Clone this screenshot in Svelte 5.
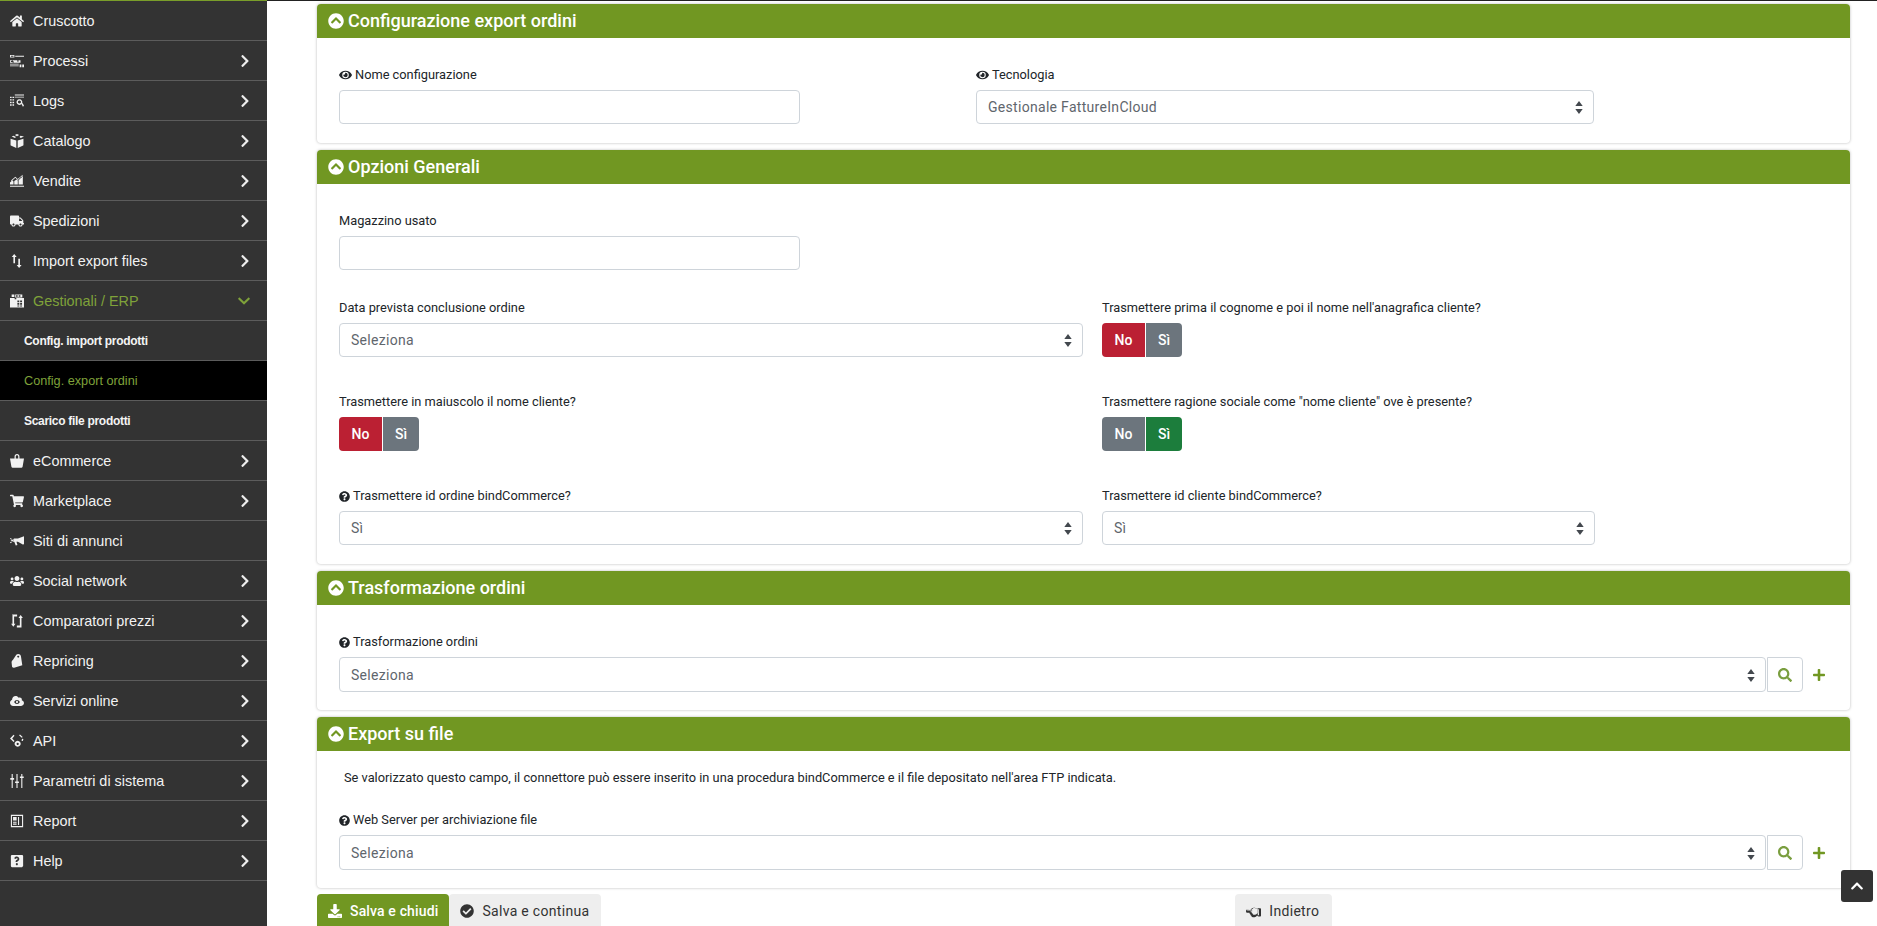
<script lang="ts">
  // font-awesome style glyphs, [viewBox width, path]
  const icons: Record<string, [number, string]> = {
    home: [576, 'M280.37 148.26L96 300.11V464a16 16 0 0 0 16 16l112.06-.29a16 16 0 0 0 15.92-16V368a16 16 0 0 1 16-16h64a16 16 0 0 1 16 16v95.64a16 16 0 0 0 16 16.05L464 480a16 16 0 0 0 16-16V300L295.67 148.26a12.19 12.19 0 0 0-15.3 0zM571.6 251.47L488 182.56V44.05a12 12 0 0 0-12-12h-56a12 12 0 0 0-12 12v72.61L318.47 43a48 48 0 0 0-61 0L4.34 251.47a12 12 0 0 0-1.6 16.9l25.5 31A12 12 0 0 0 45.15 301l235.22-193.74a12.19 12.19 0 0 1 15.3 0L530.9 301a12 12 0 0 0 16.9-1.6l25.5-31a12 12 0 0 0-1.7-16.93z'],
    processes: [512, 'M0 32h160v96H0zM32 64v32h96V64zM192 64h320v32H192zM0 224h64v32H32v32h96v-32h-32v-32h288v96H128v-32H96v32H0zM256 240v32h64v-32zM0 352h320v32H0zM352 384h64v96h-64zM448 384h64v96h-64zM0 416h320v32H0z'],
    logs: [512, 'M176 16h336v40H176zM176 96h336v30H176zM0 96h60v50H0zM90 96h60v50H90zM0 190h60v50H0zM90 190h60v50H90zM0 284h60v50H0zM90 284h60v50H90zM0 378h60v50H0zM90 378h60v50H90zM345 190a105 105 0 1 1-1 0zm0 50a55 55 0 1 0 1 0zM420 370l40-40 52 100-40 40z'],
    cube: [512, 'M256 0l80 40-80 45-80-45zM130 60l90 48-40 40-120-60zM382 60l130 28-120 60-44-40zM20 170l210 70v270L50 430a30 30 0 0 1-30-30zM492 170v230a30 30 0 0 1-30 30l-180 80V240z'],
    chart: [576, 'M0 448h576v48H0zM0 400V320l96-96 48 48v128zM176 400V260l96-70 48 50v160zM352 400V220l96-90 80-50v320zM40 240L220 80l100 90L520 0l-10 110-40-40-150 140-100-90L60 270z'],
    truck: [640, 'M624 352h-16V243.9c0-12.7-5.1-24.9-14.1-33.9L494 110.1c-9-9-21.2-14.1-33.9-14.1H416V48c0-26.5-21.5-48-48-48H48C21.5 0 0 21.5 0 48v320c0 26.5 21.5 48 48 48h16c0 53 43 96 96 96s96-43 96-96h128c0 53 43 96 96 96s96-43 96-96h48c8.8 0 16-7.2 16-16v-32c0-8.8-7.2-16-16-16zM160 464c-26.5 0-48-21.5-48-48s21.5-48 48-48 48 21.5 48 48-21.5 48-48 48zm320 0c-26.5 0-48-21.5-48-48s21.5-48 48-48 48 21.5 48 48-21.5 48-48 48zm80-208H416V144h44.1l99.9 99.9V256z'],
    updown: [384, 'M90 0l90 110h-60v230H60V110H0zM270 512l-90-110h60V170h60v232h60z'],
    erp: [512, 'M60 20h100v90H60zM190 20h260v110H190zM220 50v50h60V50zM320 50v50h60V50zM0 150h170v40h60v-40h282v342H0zM270 240v60h70v-60zM370 240v60h70v-60zM270 330v60h70v-60zM370 330v60h70v-60zM270 420v40h70v-40zM370 420v40h70v-40z'],
    basket: [512, 'M256 0c-55 0-90 40-90 100v60H0l50 300a40 40 0 0 0 40 40h332a40 40 0 0 0 40-40l50-300H346v-60c0-60-35-100-90-100zm-45 160v-60c0-35 18-55 45-55s45 20 45 55v60z'],
    cart: [576, 'M528.12 301.319l47.273-208C578.806 78.301 567.391 64 551.99 64H159.208l-9.166-44.81C147.758 8.021 137.93 0 126.529 0H24C10.745 0 0 10.745 0 24v16c0 13.255 10.745 24 24 24h69.883l70.248 343.435C147.325 417.1 136 435.222 136 456c0 30.928 25.072 56 56 56s56-25.072 56-56c0-15.674-6.447-29.835-16.824-40h209.647C430.447 426.165 424 440.326 424 456c0 30.928 25.072 56 56 56s56-25.072 56-56c0-22.172-12.888-41.332-31.579-50.405l5.517-24.276c3.413-15.018-8.002-29.319-23.403-29.319H218.117l-6.545-32h293.145c11.206 0 20.92-7.754 23.403-18.681z'],
    horn: [576, 'M576 60v330l-50 10-200-110h-60l40 130-70 20-60-150h-20V150h20h150zM170 170l-150 70 150 60-30-60zM20 130l60 40-20 30-60-40zM0 310l60-30 20 30-60 40z'],
    users: [640, 'M96 224c35.3 0 64-28.7 64-64s-28.7-64-64-64-64 28.7-64 64 28.7 64 64 64zm448 0c35.3 0 64-28.7 64-64s-28.7-64-64-64-64 28.7-64 64 28.7 64 64 64zm32 32h-64c-17.6 0-33.5 7.1-45.1 18.6 40.3 22.1 68.9 62 75.1 109.4h66c17.7 0 32-14.3 32-32v-32c0-35.3-28.7-64-64-64zm-256 0c61.9 0 112-50.1 112-112S381.9 32 320 32 208 82.1 208 144s50.1 112 112 112zm76.8 32h-8.3c-20.8 10-43.9 16-68.5 16s-47.6-6-68.5-16h-8.3C179.6 288 128 339.6 128 403.2V432c0 26.5 21.5 48 48 48h288c26.5 0 48-21.5 48-48v-28.8c0-63.6-51.6-115.2-115.2-115.2zm-223.7-13.4C161.5 263.1 145.6 256 128 256H64c-35.3 0-64 28.7-64 64v32c0 17.7 14.3 32 32 32h65.9c6.3-47.4 34.9-87.3 75.2-109.4z'],
    swap: [512, 'M70 20h190v70H150v270h50l-80 110-80-110h50V40zM250 420h110V150h-50l80-110 80 110h-50v340H250z'],
    tag: [512, 'M300 0c50 0 90 30 100 80l50 330-300 90c-30 5-60-5-75-30L60 330c-10-50 10-90 50-120L230 30c20-20 40-30 70-30zM300 60a35 35 0 1 0 1 0z'],
    cloud: [640, 'M537 222c4-10 6-20 6-30 0-53-43-96-96-96-20 0-38 6-54 16C365 63 312 32 256 32c-88 0-160 72-160 160 0 3 0 5 .1 8C40 220 0 274 0 336c0 80 64 144 144 144h368c71 0 128-57 128-128 0-62-44-114-103-130zM320 208c60 0 104 40 130 90-26 50-70 90-130 90s-104-40-130-90c26-50 70-90 130-90zm0 40a50 50 0 1 0 1 0z'],
    api: [512, 'M130 30l35 35-85 95 85 95-35 35L0 160zM330 50l35-30 100 90-35 30zM440 170l50 10-20 80-50-10zM280 250a110 110 0 1 1-1 0zm0 70a40 40 0 1 0 1 0z'],
    sliders: [512, 'M60 0h40v150h50v60h-50v302H60V210H10v-60h50zM236 0h40v270h50v60h-50v182h-40V330h-50v-60h50zM412 0h40v90h50v60h-50v362h-40V150h-50V90h50z'],
    report: [448, 'M0 30h448v452H0zM40 70v372h368V70zM80 110h130v130H80zM260 110h40v290h-40zM80 280h130v40H80zM80 350h130v40H80z'],
    helpbox: [448, 'M40 32h368a40 40 0 0 1 40 40v368l-40 40H40a40 40 0 0 1-40-40V72a40 40 0 0 1 40-40zm180 60c-50 0-80 25-100 60l50 35c12-20 25-35 48-35 18 0 34 10 34 26 0 15-12 22-30 32-25 14-50 30-50 70v15h65v-10c0-25 72-30 72-100 0-55-50-93-89-93zm-2 240a38 38 0 1 0 1 0z'],
    right: [320, 'M285.476 272.971L91.132 467.314c-9.373 9.373-24.569 9.373-33.941 0l-22.667-22.667c-9.357-9.357-9.375-24.522-.04-33.901L188.505 256 34.484 101.255c-9.335-9.379-9.317-24.544.04-33.901l22.667-22.667c9.373-9.373 24.569-9.373 33.941 0L285.475 239.03c9.373 9.372 9.373 24.568.001 33.941z'],
    down: [448, 'M207.029 381.476L12.686 187.132c-9.373-9.373-9.373-24.569 0-33.941l22.667-22.667c9.357-9.357 24.522-9.375 33.901-.04L224 284.505l154.745-154.021c9.379-9.335 24.544-9.317 33.901.04l22.667 22.667c9.373 9.373 9.373 24.569 0 33.941L240.971 381.476c-9.373 9.372-24.569 9.372-33.942 0z'],
    up: [448, 'M240.971 130.524l194.343 194.343c9.373 9.373 9.373 24.569 0 33.941l-22.667 22.667c-9.357 9.357-24.522 9.375-33.901.04L224 227.495 69.255 381.516c-9.379 9.335-24.544 9.317-33.901-.04l-22.667-22.667c-9.373-9.373-9.373-24.569 0-33.941L207.03 130.525c9.372-9.373 24.568-9.373 33.941-.001z'],
    circleUp: [512, 'M8 256C8 119 119 8 256 8s248 111 248 248-111 248-248 248S8 393 8 256zm231-113.9L103.5 277.6c-9.4 9.4-9.4 24.6 0 33.9l17 17c9.4 9.4 24.6 9.4 33.9 0L256 226.9l101.6 101.6c9.4 9.4 24.6 9.4 33.9 0l17-17c9.4-9.4 9.4-24.6 0-33.9L273 142.1c-9.4-9.4-24.6-9.4-34 0z'],
    check: [512, 'M504 256c0 136.967-111.033 248-248 248S8 392.967 8 256 119.033 8 256 8s248 111.033 248 248zM227.314 387.314l184-184c6.248-6.248 6.248-16.379 0-22.627l-22.627-22.627c-6.248-6.249-16.379-6.249-22.628 0L216 308.118l-70.059-70.059c-6.248-6.248-16.379-6.248-22.628 0l-22.627 22.627c-6.248 6.248-6.248 16.379 0 22.627l104 104c6.249 6.249 16.379 6.249 22.628.001z'],
    question: [512, 'M504 256c0 136.997-111.043 248-248 248S8 392.997 8 256C8 119.083 119.043 8 256 8s248 111.083 248 248zM262.655 90c-54.497 0-89.255 22.957-116.549 63.758-3.536 5.286-2.353 12.415 2.715 16.258l34.699 26.31c5.205 3.947 12.621 3.008 16.665-2.122 17.864-22.658 30.113-35.797 57.303-35.797 20.429 0 45.698 13.148 45.698 32.958 0 14.976-12.363 22.667-32.534 33.976C247.128 238.528 216 254.941 216 296v4c0 6.627 5.373 12 12 12h56c6.627 0 12-5.373 12-12v-1.333c0-28.462 83.186-29.647 83.186-106.667 0-58.002-60.165-102-116.531-102zM256 338c-25.365 0-46 20.635-46 46 0 25.364 20.635 46 46 46s46-20.636 46-46c0-25.365-20.635-46-46-46z'],
    search: [512, 'M505 442.7L405.3 343c-4.5-4.5-10.6-7-17-7H372c27.6-35.3 44-79.7 44-128C416 93.1 322.9 0 208 0S0 93.1 0 208s93.1 208 208 208c48.3 0 92.7-16.4 128-44v16.3c0 6.4 2.5 12.5 7 17l99.7 99.7c9.4 9.4 24.6 9.4 33.9 0l28.3-28.3c9.4-9.4 9.4-24.6.1-34zM208 336c-70.7 0-128-57.2-128-128 0-70.7 57.2-128 128-128 70.7 0 128 57.2 128 128 0 70.7-57.2 128-128 128z'],
    plus: [448, 'M416 208H272V64c0-17.67-14.33-32-32-32h-32c-17.67 0-32 14.33-32 32v144H32c-17.67 0-32 14.33-32 32v32c0 17.67 14.33 32 32 32h144v144c0 17.67 14.33 32 32 32h32c17.67 0 32-14.33 32-32V304h144c17.67 0 32-14.33 32-32v-32c0-17.67-14.33-32-32-32z'],
    eye: [576, 'M572.52 241.4C518.29 135.59 410.93 64 288 64S57.68 135.64 3.48 241.41a32.35 32.35 0 0 0 0 29.19C57.71 376.41 165.07 448 288 448s230.32-71.64 284.52-177.41a32.35 32.35 0 0 0 0-29.19zM288 400a144 144 0 1 1 144-144 143.93 143.93 0 0 1-144 144zm0-240a95.31 95.31 0 0 0-25.31 3.79 47.85 47.85 0 0 1-66.9 66.9A95.78 95.78 0 1 0 288 160z'],
    download: [512, 'M216 0h80c13.3 0 24 10.7 24 24v168h87.7c17.8 0 26.7 21.5 14.1 34.1L269.7 378.3c-7.5 7.5-19.8 7.5-27.3 0L90.1 226.1c-12.6-12.6-3.7-34.1 14.1-34.1H192V24c0-13.3 10.7-24 24-24zm296 376v112c0 13.3-10.7 24-24 24H24c-13.3 0-24-10.7-24-24V376c0-13.3 10.7-24 24-24h146.7l49 49c20.1 20.1 52.5 20.1 72.6 0l49-49H488c13.3 0 24 10.7 24 24zm-124 88c0-11-9-20-20-20s-20 9-20 20 9 20 20 20 20-9 20-20zm64 0c0-11-9-20-20-20s-20 9-20 20 9 20 20 20 20-9 20-20z'],
    hand: [512, 'M512 170v220c0 20-15 35-35 35h-50c-15 0-28-8-34-20h-20c-20 25-50 45-80 45h-60c-30 0-50-25-50-50-20-5-35-25-35-50-15-5-30-25-30-50H50c-28 0-50-24-50-55s22-55 50-55h110l45-45c25-20 60-25 90-15l100 30c10-10 20-15 30-15h50c20 0 37 15 37 25zm-70 5h-40v205h40zM50 180c-10 0-16 8-16 20s6 20 16 20h160v30h-40c-8 0-14 6-14 16s6 16 14 16h30c-6 24 8 44 24 44h10c-6 18 4 40 20 40h59c28 0 55-20 75-50h26V175l-120-35c-20-6-40-2-55 10l-55 45z']
  };

  const menu = [
    { label: 'Cruscotto', icon: 'home', arrow: false },
    { label: 'Processi', icon: 'processes', arrow: true },
    { label: 'Logs', icon: 'logs', arrow: true },
    { label: 'Catalogo', icon: 'cube', arrow: true },
    { label: 'Vendite', icon: 'chart', arrow: true },
    { label: 'Spedizioni', icon: 'truck', arrow: true },
    { label: 'Import export files', icon: 'updown', arrow: true },
    { label: 'Gestionali / ERP', icon: 'erp', arrow: true, open: true },
    { label: 'Config. import prodotti', sub: true },
    { label: 'Config. export ordini', sub: true, current: true },
    { label: 'Scarico file prodotti', sub: true },
    { label: 'eCommerce', icon: 'basket', arrow: true },
    { label: 'Marketplace', icon: 'cart', arrow: true },
    { label: 'Siti di annunci', icon: 'horn', arrow: false },
    { label: 'Social network', icon: 'users', arrow: true },
    { label: 'Comparatori prezzi', icon: 'swap', arrow: true },
    { label: 'Repricing', icon: 'tag', arrow: true },
    { label: 'Servizi online', icon: 'cloud', arrow: true },
    { label: 'API', icon: 'api', arrow: true },
    { label: 'Parametri di sistema', icon: 'sliders', arrow: true },
    { label: 'Report', icon: 'report', arrow: true },
    { label: 'Help', icon: 'helpbox', arrow: true }
  ];
</script>

{#snippet icon(name: string, cls: string)}
  <svg class={cls} viewBox="0 0 {icons[name][0]} 512" fill="currentColor" fill-rule="evenodd" aria-hidden="true">
    <path d={icons[name][1]} />
  </svg>
{/snippet}

{#snippet select(text: string, cls = '')}
  <div class="select {cls}">
    <select>
      <option>{text}</option>
    </select>
    <svg class="caret" viewBox="0 0 8 14" fill="currentColor" aria-hidden="true">
      <path d="M4 0l4 5.5H0zM4 14L0 8.5h8z" />
    </svg>
  </div>
{/snippet}

{#snippet toggle(on: 'no' | 'si')}
  <div class="toggle">
    <button type="button" class:no-on={on === 'no'}>No</button>
    <button type="button" class:si-on={on === 'si'}>Sì</button>
  </div>
{/snippet}

{#snippet lookup()}
  <div class="lookup">
    {@render select('Seleziona', 'grow')}
    <button type="button" class="search">{@render icon('search', 'ic-search')}</button>
    <span class="add">{@render icon('plus', 'ic-plus')}</span>
  </div>
{/snippet}

{#snippet header(title: string)}
  <div class="card-header">
    {@render icon('circleUp', 'ic-head')}
    <h2>{title}</h2>
  </div>
{/snippet}

<div class="page">
  <nav class="sidebar">
    {#each menu as item}
      <a class="item" class:sub={item.sub} class:open={item.open} class:current={item.current} href="#top">
        {#if item.icon}
          <span class="ic-wrap">{@render icon(item.icon, 'ic-menu')}</span>
        {/if}
        <span class="text">{item.label}</span>
        {#if item.arrow}
          {@render icon(item.open ? 'down' : 'right', item.open ? 'ic-down' : 'ic-right')}
        {/if}
      </a>
    {/each}
  </nav>

  <main class="content">
    <section class="card c1">
      {@render header('Configurazione export ordini')}
      <div class="body">
        <div class="row cols-a">
          <div>
            <span class="label">{@render icon('eye', 'ic-label')}Nome configurazione</span>
            <input type="text" />
          </div>
          <div>
            <span class="label">{@render icon('eye', 'ic-label')}Tecnologia</span>
            {@render select('Gestionale FattureInCloud')}
          </div>
        </div>
      </div>
    </section>

    <section class="card c2">
      {@render header('Opzioni Generali')}
      <div class="body">
        <div class="row first cols-a">
          <div>
            <span class="label">Magazzino usato</span>
            <input type="text" />
          </div>
        </div>
        <div class="row cols-b">
          <div>
            <span class="label">Data prevista conclusione ordine</span>
            {@render select('Seleziona')}
          </div>
          <div>
            <span class="label">Trasmettere prima il cognome e poi il nome nell'anagrafica cliente?</span>
            {@render toggle('no')}
          </div>
        </div>
        <div class="row cols-b">
          <div>
            <span class="label">Trasmettere in maiuscolo il nome cliente?</span>
            {@render toggle('no')}
          </div>
          <div>
            <span class="label">Trasmettere ragione sociale come "nome cliente" ove è presente?</span>
            {@render toggle('si')}
          </div>
        </div>
        <div class="row cols-b">
          <div>
            <span class="label">{@render icon('question', 'ic-label-q')}Trasmettere id ordine bindCommerce?</span>
            {@render select('Sì')}
          </div>
          <div>
            <span class="label">Trasmettere id cliente bindCommerce?</span>
            {@render select('Sì')}
          </div>
        </div>
      </div>
    </section>

    <section class="card c3">
      {@render header('Trasformazione ordini')}
      <div class="body">
        <span class="label">{@render icon('question', 'ic-label-q')}Trasformazione ordini</span>
        {@render lookup()}
      </div>
    </section>

    <section class="card c4">
      {@render header('Export su file')}
      <div class="body">
        <p class="note">Se valorizzato questo campo, il connettore può essere inserito in una procedura bindCommerce e il file depositato nell'area FTP indicata.</p>
        <span class="label">{@render icon('question', 'ic-label-q')}Web Server per archiviazione file</span>
        {@render lookup()}
      </div>
    </section>

    <div class="actions">
      <button type="button" class="btn primary">{@render icon('download', 'ic-btn')}Salva e chiudi</button>
      <button type="button" class="btn">{@render icon('check', 'ic-btn')}Salva e continua</button>
      <button type="button" class="btn back">{@render icon('hand', 'ic-hand')}Indietro</button>
    </div>
  </main>
</div>

<button type="button" class="to-top" aria-label="Torna su">{@render icon('up', 'ic-top')}</button>

<style>
  :global(html), :global(body) {
    margin: 0;
    height: 100%;
    overflow: hidden;
    background: #fff;
  }

  .page {
    display: flex;
    height: 926px;
    overflow: hidden;
    font-family: Roboto, "Liberation Sans", sans-serif;
    color: #212529;
  }

  .sidebar {
    flex: 0 0 267px;
    box-sizing: border-box;
    border-top: 1px solid #7a9e2a;
    background: #333;
    font-family: "Liberation Sans", Arial, sans-serif;
  }

  .item {
    display: flex;
    align-items: center;
    box-sizing: border-box;
    height: 40px;
    padding: 1px 17px 0 10px;
    border-bottom: 1px solid #5c5c5c;
    color: #f2f2f2;
    font-size: 14.4px;
    text-decoration: none;
  }

  .item.open { color: #7fa23a; }
  .item.open .ic-wrap { color: #f2f2f2; }

  .item.sub {
    padding-left: 24px;
    font-size: 12px;
    font-weight: 700;
    letter-spacing: -0.3px;
    color: #f4f4f4;
  }

  .item.current {
    background: #000;
    color: #7fa23a;
    font-size: 12.7px;
    font-weight: 400;
    letter-spacing: 0;
  }

  .ic-wrap {
    display: flex;
    justify-content: center;
    flex: 0 0 14px;
    margin-right: 9px;
  }

  .ic-menu {
    width: 14px;
    height: 14px;
  }

  .text { flex: 1; }

  .ic-right {
    width: 10px;
    height: 14px;
    color: #eee;
  }

  .ic-down {
    width: 12px;
    height: 14px;
    color: #7fa23a;
  }

  .content {
    flex: 1;
    box-sizing: border-box;
    min-width: 0;
    padding: 4px 27px 0 50px;
    border-top: 1px solid #222;
  }

  .content > .card:first-child { margin-top: -1px; }

  .card {
    margin-bottom: 7px;
    border-radius: 4px;
    background: #fff;
    box-shadow: 0 0 3px rgba(0, 0, 0, 0.28);
  }

  .card-header {
    display: flex;
    align-items: center;
    height: 34px;
    padding-left: 11px;
    border-radius: 4px 4px 0 0;
    background: #719722;
    color: #fff;
  }

  .card-header h2 {
    margin: 0;
    font-size: 18px;
    font-weight: 500;
    line-height: 34px;
  }

  .ic-head {
    width: 16px;
    height: 16px;
    margin-right: 4px;
  }

  .body {
    padding: 28px 22px 19px;
  }

  .c3 .body { padding-bottom: 18px; }
  .c4 .body { padding-bottom: 18px; padding-top: 19px; }

  .row {
    display: grid;
    margin-bottom: 36px;
  }

  .row:last-child { margin-bottom: 0; }
  .row.first { margin-bottom: 29px; }

  .cols-a {
    grid-template-columns: 461px 618px;
    column-gap: 176px;
  }

  .cols-b {
    grid-template-columns: 744px 493px;
    column-gap: 19px;
  }

  .label {
    display: flex;
    align-items: center;
    box-sizing: border-box;
    height: 16px;
    margin-bottom: 8px;
    padding-top: 2px;
    font-size: 12.8px;
    line-height: 14px;
    color: #212529;
  }

  .ic-label {
    width: 13px;
    height: 12px;
    margin-right: 3px;
  }

  .ic-label-q {
    width: 11px;
    height: 11px;
    margin-right: 3px;
  }

  input, select {
    display: block;
    box-sizing: border-box;
    width: 100%;
    height: 34px;
    border: 1px solid #ced4da;
    border-radius: 4px;
    background: #fff;
    outline: none;
  }

  select {
    appearance: none;
    padding: 0 24px 0 11px;
    font-family: Roboto, "Liberation Sans", sans-serif;
    font-size: 14px;
    letter-spacing: 0.3px;
    color: #5f666d;
  }

  .select { position: relative; }

  .caret {
    position: absolute;
    top: 50%;
    right: 11px;
    width: 8px;
    height: 13px;
    margin-top: -6px;
    color: #43484e;
  }

  .toggle {
    display: flex;
    gap: 1px;
  }

  .toggle button {
    height: 34px;
    padding: 0;
    border: 0;
    background: #6c757d;
    color: #fff;
    font-family: Roboto, "Liberation Sans", sans-serif;
    font-size: 14px;
    font-weight: 500;
  }

  .toggle button:first-child {
    width: 43px;
    border-radius: 4px 0 0 4px;
  }

  .toggle button:last-child {
    width: 36px;
    border-radius: 0 4px 4px 0;
  }

  .toggle button.no-on { background: #bb2033; }
  .toggle button.si-on { background: #1c7d3c; }

  .lookup {
    display: flex;
    align-items: center;
    margin-right: -7px;
  }

  .lookup .select { flex: 1; }
  .lookup select { height: 35px; }

  .search {
    display: flex;
    align-items: center;
    justify-content: center;
    box-sizing: border-box;
    width: 36px;
    height: 35px;
    margin-left: 1px;
    padding: 0;
    border: 1px solid #ced4da;
    border-radius: 0 4px 4px 0;
    background: #fff;
    color: #7a9e3f;
  }

  .ic-search {
    width: 14px;
    height: 14px;
  }

  .add {
    display: flex;
    justify-content: center;
    width: 32px;
    color: #719722;
  }

  .ic-plus {
    width: 12px;
    height: 14px;
  }

  .note {
    margin: 0 0 25px 5px;
    font-size: 12.8px;
    line-height: 16px;
  }

  .actions {
    display: flex;
    margin-top: -1px;
  }

  .btn {
    display: flex;
    align-items: center;
    box-sizing: border-box;
    height: 34px;
    padding: 0 12px 0 11px;
    border: 0;
    border-radius: 4px 4px 0 0;
    background: #eee;
    color: #333;
    font-family: Roboto, "Liberation Sans", sans-serif;
    font-size: 14px;
    letter-spacing: 0.3px;
  }

  .btn.primary {
    padding-right: 11px;
    background: #719722;
    color: #fff;
    font-weight: 500;
    letter-spacing: 0.15px;
  }

  .btn.back {
    margin-left: 634px;
    padding: 0 13px 0 11px;
  }

  .ic-btn {
    width: 14px;
    height: 14px;
    margin-right: 8px;
  }

  .ic-hand {
    width: 15px;
    height: 15px;
    margin-right: 8px;
  }

  .to-top {
    position: fixed;
    top: 870px;
    left: 1841px;
    display: flex;
    align-items: center;
    justify-content: center;
    width: 32px;
    height: 32px;
    padding: 0;
    border: 0;
    border-radius: 3px;
    background: #333;
    color: #fff;
  }

  .ic-top {
    width: 14px;
    height: 14px;
  }
</style>
